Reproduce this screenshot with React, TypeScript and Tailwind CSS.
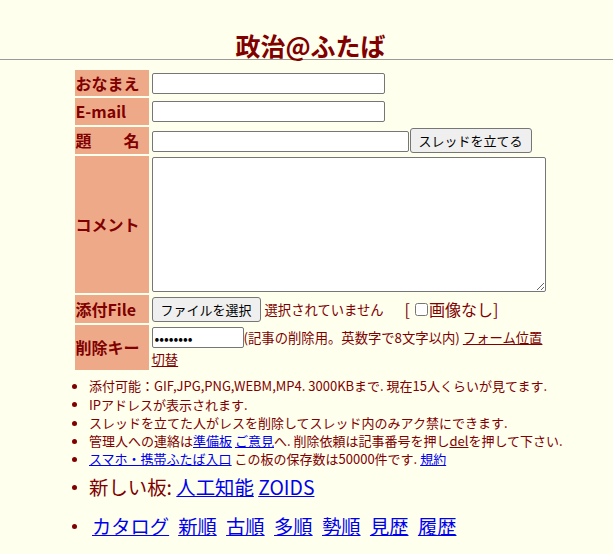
import React from "react";

const labelCls =
  "w-[74px] bg-[#eeaa88] px-px py-0 text-[16px] font-bold leading-[23px] align-middle whitespace-nowrap text-left";
const inputCls =
  "block h-[21px] bg-white border border-[#767676] rounded-[2px] px-[2px] text-[13px] text-black outline-none";
const btnCls =
  "bg-[#efefef] border border-[#767676] rounded-[3px] px-2 py-[2px] text-[13px] leading-[19px] text-black whitespace-nowrap";

function Bullet() {
  return <span className="mr-[12px] inline-block h-[5px] w-[5px] shrink-0 rounded-full bg-[#800000]" />;
}

export default function App() {
  return (
    <div className="min-h-screen bg-[#ffffee] text-[#800000] font-['Noto_Sans_CJK_JP','Noto_Sans',sans-serif]">
      <div className="pl-2 pt-[33px] text-center text-[25px] leading-[25px] font-bold">政治@ふたば</div>
      <div className="mt-px h-px bg-[#9a9a9a]" />
      <div className="pl-2">
        <table className="mx-auto mt-2 border-separate border-spacing-[2px]">
          <tbody>
            <tr>
              <td className={labelCls + " h-[26.4px]"}>おなまえ</td>
              <td className="p-px align-middle">
                <input type="text" className={inputCls + " w-[233px]"} />
              </td>
            </tr>
            <tr>
              <td className={labelCls + " h-[26.4px]"}>E-mail</td>
              <td className="p-px align-middle">
                <input type="text" className={inputCls + " w-[233px]"} />
              </td>
            </tr>
            <tr>
              <td className={labelCls + " h-[26.4px]"}>題　　名</td>
              <td className="p-px align-middle">
                <div className="flex items-center gap-px">
                  <input type="text" className={inputCls + " w-[257px] mt-[2px]"} />
                  <button type="button" className={btnCls}>スレッドを立てる</button>
                </div>
              </td>
            </tr>
            <tr>
              <td className={labelCls}>コメント</td>
              <td className="p-px align-middle">
                <textarea className="block h-[135px] w-[394px] bg-white border border-[#767676] rounded-[2px] text-[13px] text-black outline-none" />
              </td>
            </tr>
            <tr>
              <td className={labelCls + " h-[28.5px]"}>添付File</td>
              <td className="p-px align-middle">
                <div className="flex items-center">
                  <span className="inline-flex w-[249px] items-center">
                    <button type="button" className={btnCls}>ファイルを選択</button>
                    <span className="ml-[4px] text-[13.33px] leading-[19px] whitespace-nowrap">選択されていません</span>
                  </span>
                  <span className="ml-[4px] inline-flex items-center text-[16px] leading-[23px] whitespace-nowrap">
                    [
                    <input type="checkbox" className="m-0 ml-[5px] mr-[1px] h-[13px] w-[13px]" />
                    画像なし]
                  </span>
                </div>
              </td>
            </tr>
            <tr>
              <td className={labelCls + " h-[42.3px]"}>削除キー</td>
              <td className="p-px align-middle">
                <div className="w-[394px] text-[13.33px] leading-[19px]">
                  <input
                    type="password"
                    defaultValue="12345678"
                    className="inline-block align-middle h-[21px] w-[92px] bg-white border border-[#767676] rounded-[2px] px-[2px] text-[14px] text-black outline-none"
                  />
                  <span className="align-middle">(記事の削除用。英数字で8文字以内) </span>
                  <a href="#" className="underline align-middle">
                    フォーム位置
                    <br />
                    切替
                  </a>
                </div>
              </td>
            </tr>
          </tbody>
        </table>
      </div>
      <ul className="mt-[5.4px] pl-[72px] text-[13px] leading-[18.25px]">
        <li className="flex items-center">
          <Bullet />
          <span>添付可能：GIF,JPG,PNG,WEBM,MP4. 3000KBまで. 現在15人くらいが見てます.</span>
        </li>
        <li className="flex items-center">
          <Bullet />
          <span>IPアドレスが表示されます.</span>
        </li>
        <li className="flex items-center">
          <Bullet />
          <span>スレッドを立てた人がレスを削除してスレッド内のみアク禁にできます.</span>
        </li>
        <li className="flex items-center">
          <Bullet />
          <span>
            管理人への連絡は<a href="#" className="text-[#0000ee] underline">準備板</a>{" "}
            <a href="#" className="text-[#0000ee] underline">ご意見</a>へ. 削除依頼は記事番号を押し
            <a href="#" className="underline">del</a>を押して下さい.
          </span>
        </li>
        <li className="flex items-center">
          <Bullet />
          <span>
            <a href="#" className="text-[#0000ee] underline">スマホ・携帯ふたば入口</a> この板の保存数は50000件です.{" "}
            <a href="#" className="text-[#0000ee] underline">規約</a>
          </span>
        </li>
        <li className="mt-[4.35px] flex h-[28px] items-center">
          <Bullet />
          <span className="text-[19.4px] leading-[28px] whitespace-nowrap">
            新しい板: <a href="#" className="text-[#0000ee] underline">人工知能</a>{" "}
            <a href="#" className="text-[#0000ee] underline">ZOIDS</a>
          </span>
        </li>
        <li className="mt-[11px] flex h-[28px] items-center">
          <Bullet />
          <span className="text-[19.3px] leading-[28px] whitespace-nowrap">
            <a href="#" className="ml-[3px] mr-[9px] text-[#0000ee] underline">カタログ</a>
            <a href="#" className="mr-[9.4px] text-[#0000ee] underline">新順</a>
            <a href="#" className="mr-[9.4px] text-[#0000ee] underline">古順</a>
            <a href="#" className="mr-[9.4px] text-[#0000ee] underline">多順</a>
            <a href="#" className="mr-[9.4px] text-[#0000ee] underline">勢順</a>
            <a href="#" className="mr-[9.4px] text-[#0000ee] underline">見歴</a>
            <a href="#" className="text-[#0000ee] underline">履歴</a>
          </span>
        </li>
      </ul>
    </div>
  );
}
